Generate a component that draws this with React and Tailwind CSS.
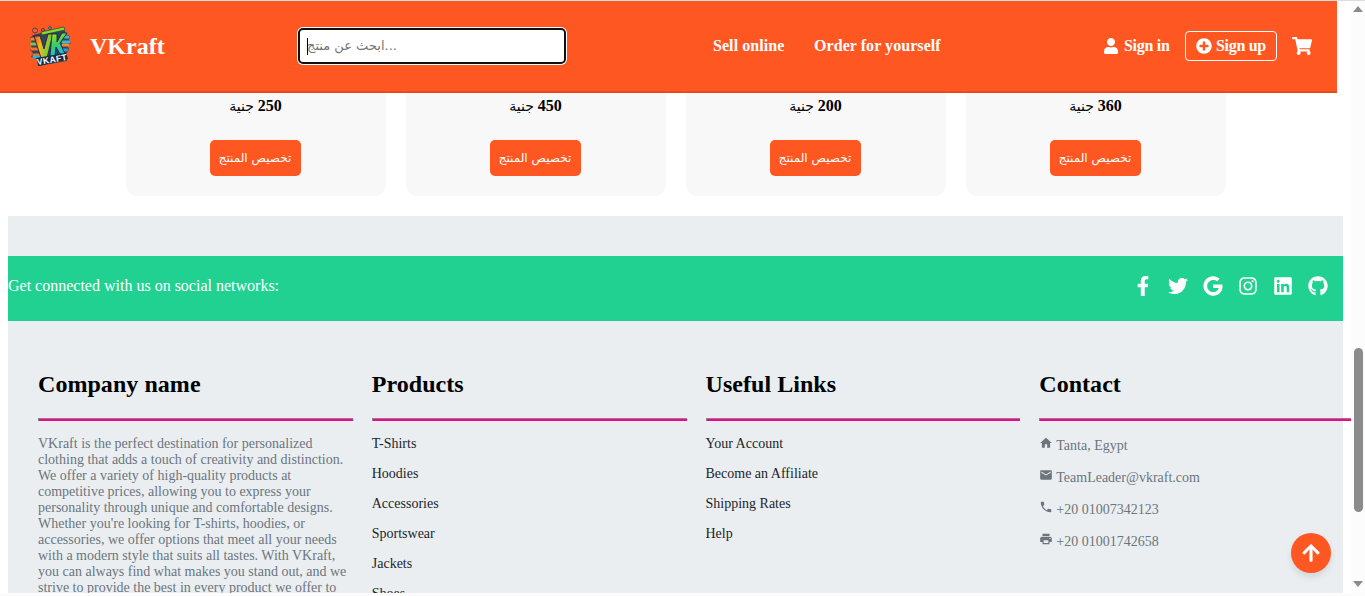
import React from "react";
import {
  FaUser, FaPlusCircle, FaShoppingCart, FaFacebookF, FaTwitter, FaGoogle, FaInstagram, FaLinkedin, FaGithub, FaArrowUp,
} from "react-icons/fa";
import { MdHome, MdEmail, MdPhone, MdPrint } from "react-icons/md";

const prices = [250, 450, 200, 360];
const socials = [FaFacebookF, FaTwitter, FaGoogle, FaInstagram, FaLinkedin, FaGithub];
const products = ["T-Shirts", "Hoodies", "Accessories", "Sportswear", "Jackets", "Shoes"];
const links = ["Your Account", "Become an Affiliate", "Shipping Rates", "Help"];
const contacts = [
  [MdHome, "Tanta, Egypt"],
  [MdEmail, "TeamLeader@vkraft.com"],
  [MdPhone, "+20 01007342123"],
  [MdPrint, "+20 01001742658"],
];

function Logo() {
  return (
    <svg viewBox="0 0 44 44" className="mt-[3px] h-11 w-11 shrink-0">
      <defs>
        <linearGradient id="v" x1="0" y1="0" x2="1" y2="0.3">
          <stop offset="0" stopColor="#f23b1f" />
          <stop offset=".4" stopColor="#ffb51b" />
          <stop offset="1" stopColor="#58cf3a" />
        </linearGradient>
        <linearGradient id="k" x1="0" y1="0" x2=".3" y2="1">
          <stop offset="0" stopColor="#b5e61d" />
          <stop offset=".5" stopColor="#43cf59" />
          <stop offset="1" stopColor="#18bde8" />
        </linearGradient>
      </defs>
      <path d="M5 9 13 7 36 3 38 8 42 10 41 14 43 17 40 20 41 24 38 28 39 35 10 40 9 33 3 31 5 27 2 24 4 21 1 18 4 15 2 12Z" fill="#33435a" />
      <g strokeWidth="3" strokeLinecap="round">
        <path d="M4 13h5" stroke="#f5812a" />
        <path d="M3 18h6" stroke="#8fbf4a" />
        <path d="M4 23h6M6 29h5" stroke="#f5702a" />
        <path d="M6 31h5" stroke="#27b8cf" />
        <path d="M37 11h3M35 16h6" stroke="#38b8d6" />
        <path d="M35 19h5" stroke="#f48b31" />
        <path d="M35 24h4" stroke="#2b9fd2" />
      </g>
      <circle cx="7" cy="4.5" r="2.5" fill="#ef642c" stroke="#5a3d49" />
      <circle cx="15" cy="4" r="1.6" fill="#e05127" stroke="#5a3d49" />
      <circle cx="22" cy="2" r="1.4" fill="#25b5d2" stroke="#293349" strokeWidth=".7" />
      <path d="M13 6 36 1 37 4 14 9Z" fill="#86dc28" stroke="#24404a" strokeWidth=".7" />
      <path d="M6 10h6l4 13 4-15h5l-6 24h-6Z" fill="url(#v)" stroke="#172b40" strokeWidth=".9" />
      <path d="M24 8h5v8l5-9h5l-7 10 5 11h-5l-4-7-1 9h-5Z" fill="url(#k)" stroke="#172b40" strokeWidth=".9" />
      <path d="M8 32 38 27 40 33 11 40Z" fill="#192a42" />
      <text x="9.5" y="39" transform="rotate(-10 10 39)" fontFamily="Liberation Sans, sans-serif" fontSize="8.5" fontWeight="700" textLength="30" fill="#fff">VKAFT</text>
    </svg>
  );
}

function Column({ title, children }) {
  return (
    <section className="w-[333.75px] shrink-0 pr-[19px]">
      <h2 className="h-[33px] text-[24px] leading-[27px] font-bold text-black tracking-[0.05px]">{title}</h2>
      <div className="mt-[14px] mb-[15px] h-[3px] border-t border-l border-[#858585] bg-[#ff0090]" />
      {children}
    </section>
  );
}

export default function App() {
  return (
    <div className="relative flex h-[596px] w-[1365px] overflow-hidden bg-white font-['Liberation_Serif','DejaVu_Sans',serif] text-black">
      <div className="flex h-[593px] w-[1351px] shrink-0 flex-col overflow-hidden">
        <header className="flex h-[93px] w-[1337px] shrink-0 items-center border-t border-b-2 border-t-[#dedede] border-b-[#e64a19] bg-[#ff5722] pl-7 text-white">
          <Logo />
          <div className="ml-[18px] w-[207px] text-[24px] leading-7 font-bold">VKraft</div>
          <div className="flex h-[38px] w-[270px] shrink-0 items-center justify-center rounded-[6px] bg-white">
            <div className="flex h-[36px] w-[268px] items-center rounded-[5px] border-2 border-[#101010] pl-[7px] text-[#757575]">
              <span className="h-[17px] w-px bg-black" />
              <span dir="ltr" className="-ml-px font-['DejaVu_Sans',sans-serif] text-[13px] leading-5 tracking-[-0.1px] whitespace-nowrap">ابحث عن منتج...</span>
            </div>
          </div>
          <nav className="ml-[146px] flex text-base leading-[18px] font-bold tracking-[0.06px]">
            <span className="w-[101px]">Sell online</span>
            <span className="w-[289px]">Order for yourself</span>
          </nav>
          <div className="flex items-center text-base leading-[18px] font-bold tracking-[-0.3px]">
            <FaUser className="mr-[5px] h-4 w-4" />
            <span className="w-[61px] whitespace-nowrap">Sign in</span>
            <div className="flex h-[30px] w-[92px] shrink-0 items-center rounded border border-white pl-[10px]">
              <FaPlusCircle className="mr-[4px] h-4 w-4" />
              <span className="whitespace-nowrap">Sign up</span>
            </div>
            <FaShoppingCart className="ml-[15px] h-[18px] w-5" />
          </div>
        </header>

        <main className="flex h-[123px] shrink-0 gap-5 pl-[126px]">
          {prices.map((p) => (
            <article key={p} className="flex h-[103px] w-[260px] shrink-0 flex-col items-center rounded-b-[12px] bg-[#f8f8f8] pr-px">
              <p className="mt-[3px] flex h-5 items-center gap-1 text-[16px] leading-5">
                <span className="font-['DejaVu_Sans',sans-serif] text-[14px]">جنية</span>
                <b>{p}</b>
              </p>
              <button className="mt-6 mr-px h-9 w-[91px] rounded-[5px] bg-[#ff5722] font-['DejaVu_Sans',sans-serif] text-[12px] whitespace-nowrap text-white">تخصيص المنتج</button>
            </article>
          ))}
        </main>

        <footer className="ml-2 flex h-[377px] w-[1343px] shrink-0 flex-col bg-[linear-gradient(to_right,#eaeef1_1335px,white_1335px)] pt-10">
          <div className="flex h-[65px] w-[1335px] shrink-0 items-center bg-[#21d192] text-white">
            <p className="-mt-[5px] flex-1 text-[16px] leading-[18px]">Get connected with us on social networks:</p>
            <div className="-mt-[5px] flex gap-[15px] pr-[15px]">
              {socials.map((Icon, i) => <Icon key={i} className="h-5 w-5" />)}
            </div>
          </div>
          <div className="flex pt-[50px] pl-[30px]">
            <Column title="Company name">
              <p className="w-[315px] text-[14px] leading-4 text-[#6c757d]">
                VKraft is the perfect destination for personalized<br />
                clothing that adds a touch of creativity and distinction.<br />
                We offer a variety of high-quality products at<br />
                competitive prices, allowing you to express your<br />
                personality through unique and comfortable designs.<br />
                Whether you're looking for T-shirts, hoodies, or<br />
                accessories, we offer options that meet all your needs<br />
                with a modern style that suits all tastes. With VKraft,<br />
                you can always find what makes you stand out, and we<br />
                strive to provide the best in every product we offer to
              </p>
            </Column>
            <Column title="Products">
              <ul className="flex flex-col gap-[14px] text-[14px] leading-4 text-[#212529]">
                {products.map((p) => <li key={p}>{p}</li>)}
              </ul>
            </Column>
            <Column title="Useful Links">
              <ul className="flex flex-col gap-[14px] text-[14px] leading-4 text-[#212529]">
                {links.map((p) => <li key={p}>{p}</li>)}
              </ul>
            </Column>
            <Column title="Contact">
              <ul className="flex flex-col gap-4 pt-[2px] text-[14px] leading-4 text-[#6c757d]">
                {contacts.map(([Icon, t]) => (
                  <li key={t} className="flex gap-[3px]">
                    <Icon className="-mt-[2px] h-[14px] w-[14px]" />
                    <span>{t}</span>
                  </li>
                ))}
              </ul>
            </Column>
          </div>
        </footer>
      </div>

      <div className="flex h-[596px] w-[14px] shrink-0 flex-col items-center border-t border-[#dedede] bg-[#fcfcfc]">
        <svg viewBox="0 0 10 6" className="mt-[5px] h-[6px] w-[10px] shrink-0"><path d="M0 6 5 0 10 6Z" fill="#8b8b8b" /></svg>
        <div className="mt-[336px] h-[164px] w-[9px] shrink-0 rounded-full bg-[#8b8b8b]" />
        <svg viewBox="0 0 10 6" className="mt-[69px] h-[6px] w-[10px] shrink-0"><path d="M0 0H10L5 6Z" fill="#8b8b8b" /></svg>
      </div>
      <div className="absolute bottom-0 left-0 h-[3px] w-[1351px] bg-[#fcfcfc]" />
      <div className="absolute top-0 left-[1337px] h-px w-[28px] bg-[#dedede]" />
      <button className="absolute top-[533px] left-[1291px] flex h-10 w-10 items-center justify-center rounded-full bg-[#ff5722] text-white shadow-[0_4px_6px_rgba(0,0,0,0.1)]">
        <FaArrowUp className="h-5 w-5" />
      </button>
    </div>
  );
}
